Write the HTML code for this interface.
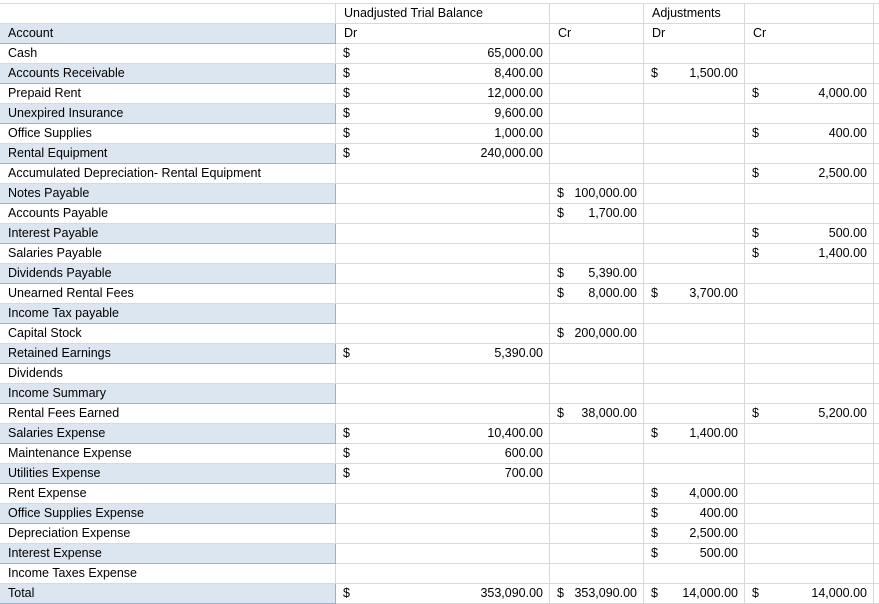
<!DOCTYPE html><html><head><style>
body{margin:0;background:#fff;width:879px;height:604px;overflow:hidden;font-family:"Liberation Sans",Arial,sans-serif;font-size:12.5px;color:#000}
table{border-collapse:collapse;table-layout:fixed;position:absolute;left:-1px;top:3px;width:894px}
td{height:19px;border:1px solid #d9d9d9;padding:0 6px 0 8px;white-space:nowrap;overflow:hidden;position:relative;line-height:19px;vertical-align:bottom;box-sizing:border-box}
td.b{background:#dce6f1;border-color:#95b3d7}
td i{font-style:normal;position:absolute;left:7px}
td span{float:right}
</style></head><body>
<table>
<colgroup><col style="width:336px"><col style="width:214px"><col style="width:94px"><col style="width:101px"><col style="width:129px"><col style="width:20px"></colgroup>
<tr><td></td><td>Unadjusted Trial Balance</td><td></td><td>Adjustments</td><td></td><td></td></tr>
<tr><td class="b">Account</td><td>Dr</td><td>Cr</td><td>Dr</td><td>Cr</td><td></td></tr>
<tr><td>Cash</td><td><i>$</i><span>65,000.00</span></td><td></td><td></td><td></td><td></td></tr>
<tr><td class="b">Accounts Receivable</td><td><i>$</i><span>8,400.00</span></td><td></td><td><i>$</i><span>1,500.00</span></td><td></td><td></td></tr>
<tr><td>Prepaid Rent</td><td><i>$</i><span>12,000.00</span></td><td></td><td></td><td><i>$</i><span>4,000.00</span></td><td></td></tr>
<tr><td class="b">Unexpired Insurance</td><td><i>$</i><span>9,600.00</span></td><td></td><td></td><td></td><td></td></tr>
<tr><td>Office Supplies</td><td><i>$</i><span>1,000.00</span></td><td></td><td></td><td><i>$</i><span>400.00</span></td><td></td></tr>
<tr><td class="b">Rental Equipment</td><td><i>$</i><span>240,000.00</span></td><td></td><td></td><td></td><td></td></tr>
<tr><td>Accumulated Depreciation- Rental Equipment</td><td></td><td></td><td></td><td><i>$</i><span>2,500.00</span></td><td></td></tr>
<tr><td class="b">Notes Payable</td><td></td><td><i>$</i><span>100,000.00</span></td><td></td><td></td><td></td></tr>
<tr><td>Accounts Payable</td><td></td><td><i>$</i><span>1,700.00</span></td><td></td><td></td><td></td></tr>
<tr><td class="b">Interest Payable</td><td></td><td></td><td></td><td><i>$</i><span>500.00</span></td><td></td></tr>
<tr><td>Salaries Payable</td><td></td><td></td><td></td><td><i>$</i><span>1,400.00</span></td><td></td></tr>
<tr><td class="b">Dividends Payable</td><td></td><td><i>$</i><span>5,390.00</span></td><td></td><td></td><td></td></tr>
<tr><td>Unearned Rental Fees</td><td></td><td><i>$</i><span>8,000.00</span></td><td><i>$</i><span>3,700.00</span></td><td></td><td></td></tr>
<tr><td class="b">Income Tax payable</td><td></td><td></td><td></td><td></td><td></td></tr>
<tr><td>Capital Stock</td><td></td><td><i>$</i><span>200,000.00</span></td><td></td><td></td><td></td></tr>
<tr><td class="b">Retained Earnings</td><td><i>$</i><span>5,390.00</span></td><td></td><td></td><td></td><td></td></tr>
<tr><td>Dividends</td><td></td><td></td><td></td><td></td><td></td></tr>
<tr><td class="b">Income Summary</td><td></td><td></td><td></td><td></td><td></td></tr>
<tr><td>Rental Fees Earned</td><td></td><td><i>$</i><span>38,000.00</span></td><td></td><td><i>$</i><span>5,200.00</span></td><td></td></tr>
<tr><td class="b">Salaries Expense</td><td><i>$</i><span>10,400.00</span></td><td></td><td><i>$</i><span>1,400.00</span></td><td></td><td></td></tr>
<tr><td>Maintenance Expense</td><td><i>$</i><span>600.00</span></td><td></td><td></td><td></td><td></td></tr>
<tr><td class="b">Utilities Expense</td><td><i>$</i><span>700.00</span></td><td></td><td></td><td></td><td></td></tr>
<tr><td>Rent Expense</td><td></td><td></td><td><i>$</i><span>4,000.00</span></td><td></td><td></td></tr>
<tr><td class="b">Office Supplies Expense</td><td></td><td></td><td><i>$</i><span>400.00</span></td><td></td><td></td></tr>
<tr><td>Depreciation Expense</td><td></td><td></td><td><i>$</i><span>2,500.00</span></td><td></td><td></td></tr>
<tr><td class="b">Interest Expense</td><td></td><td></td><td><i>$</i><span>500.00</span></td><td></td><td></td></tr>
<tr><td>Income Taxes Expense</td><td></td><td></td><td></td><td></td><td></td></tr>
<tr><td class="b">Total</td><td><i>$</i><span>353,090.00</span></td><td><i>$</i><span>353,090.00</span></td><td><i>$</i><span>14,000.00</span></td><td><i>$</i><span>14,000.00</span></td><td></td></tr>
</table>
</body></html>
